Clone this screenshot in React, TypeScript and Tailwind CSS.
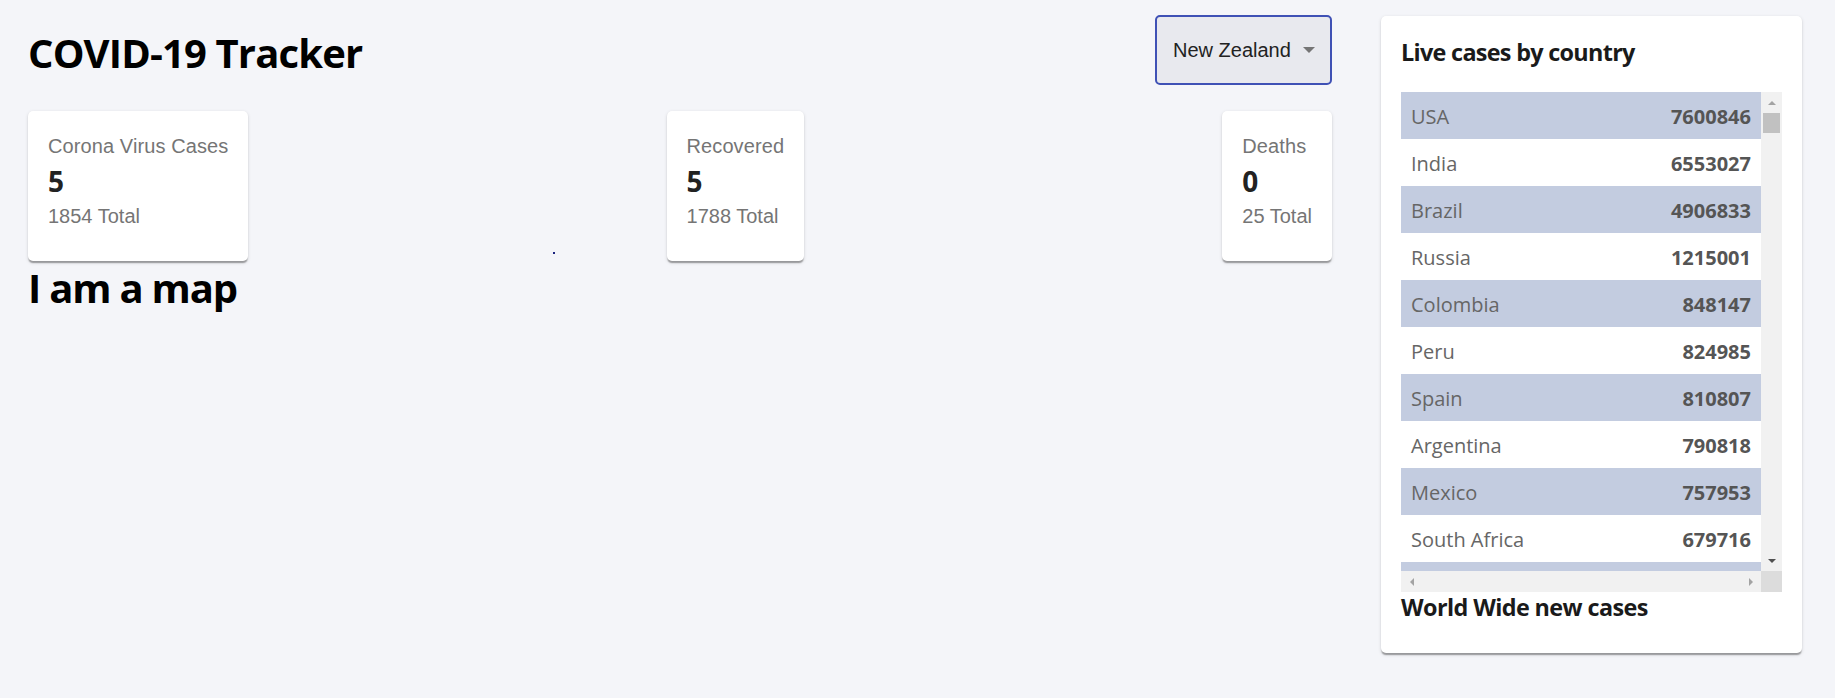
import React from 'react';

type Stat = { title: string; cases: number; total: number };

const stats: Stat[] = [
  { title: 'Corona Virus Cases', cases: 5, total: 1854 },
  { title: 'Recovered', cases: 5, total: 1788 },
  { title: 'Deaths', cases: 0, total: 25 },
];

const countries: [string, number][] = [
  ['USA', 7600846],
  ['India', 6553027],
  ['Brazil', 4906833],
  ['Russia', 1215001],
  ['Colombia', 848147],
  ['Peru', 824985],
  ['Spain', 810807],
  ['Argentina', 790818],
  ['Mexico', 757953],
  ['South Africa', 679716],
];

function InfoBox({ title, cases, total }: Stat) {
  return (
    <div className="bg-white rounded-[5px] pt-[20px] px-[20px] pb-[30px] shadow-[0_2.5px_1.25px_-1.25px_rgba(0,0,0,0.2),0_1.25px_1.25px_0_rgba(0,0,0,0.14),0_1.25px_3.75px_0_rgba(0,0,0,0.12)]">
      <p className="font-['Liberation_Sans',Arial,sans-serif] text-[20px] leading-[30px] text-[#757575] whitespace-nowrap tracking-[0.1px]">
        {title}
      </p>
      <h2 className="font-['Open_Sans',sans-serif] text-[28px] leading-[40px] font-bold text-[#222]">{cases}</h2>
      <p className="font-['Liberation_Sans',Arial,sans-serif] text-[20px] leading-[30px] text-[#757575] whitespace-nowrap">
        {total} Total
      </p>
    </div>
  );
}

function CountryTable() {
  return (
    <div className="w-[381px] h-[500px] flex flex-col">
      <div className="flex h-[479px]">
        <div className="w-[360px] overflow-hidden">
          {countries.map(([name, cases], i) => (
            <div
              key={name}
              className={`flex justify-between items-center h-[47px] px-[10px] pt-[1px] text-[20px] leading-[27px] font-['Open_Sans',sans-serif] ${
                i % 2 === 0 ? 'bg-[#c3cce0]' : 'bg-white'
              }`}
            >
              <span className="text-[#666]">{name}</span>
              <span className="font-bold text-[#555]">{cases}</span>
            </div>
          ))}
          {/* next row, scrolled out of view */}
          <div className="h-[47px] bg-[#c3cce0]" />
        </div>
        {/* vertical scrollbar */}
        <div className="w-[21px] bg-[#f1f1f1] flex flex-col items-center">
          <div className="h-[21px] w-full flex items-center justify-center">
            <div className="w-0 h-0 border-x-[4px] border-x-transparent border-b-[4px] border-b-[#a3a3a3]" />
          </div>
          <div className="w-[17px] h-[20px] bg-[#c1c1c1]" />
          <div className="flex-1" />
          <div className="h-[21px] w-full flex items-center justify-center">
            <div className="w-0 h-0 border-x-[4px] border-x-transparent border-t-[4px] border-t-[#505050]" />
          </div>
        </div>
      </div>
      {/* horizontal scrollbar */}
      <div className="flex h-[21px]">
        <div className="w-[360px] bg-[#f1f1f1] flex items-center justify-between">
          <div className="w-[21px] h-full flex items-center justify-center">
            <div className="w-0 h-0 border-y-[4px] border-y-transparent border-r-[4px] border-r-[#a3a3a3]" />
          </div>
          <div className="w-[21px] h-full flex items-center justify-center">
            <div className="w-0 h-0 border-y-[4px] border-y-transparent border-l-[4px] border-l-[#a3a3a3]" />
          </div>
        </div>
        <div className="w-[21px] bg-[#dcdcdc]" />
      </div>
    </div>
  );
}

export default function App() {
  return (
    <div className="min-h-screen bg-[#f4f5f9] flex gap-[49px] pl-[28px] pr-[33px] pt-[15px]">
      <div className="flex-1 min-w-0">
        <div className="flex justify-between items-start">
          <h1 className="mt-[11px] font-['Open_Sans',sans-serif] text-[40px] leading-[54px] font-bold tracking-[-0.85px] text-black">
            COVID-19 Tracker
          </h1>
          <div className="w-[177px] h-[70px] border-2 border-[#3f51b5] rounded-[5px] bg-[#e8e9ee] flex items-center justify-between pl-[16px] pr-[15px]">
            <span className="font-['Liberation_Sans',Arial,sans-serif] text-[20px] text-[#222]">New Zealand</span>
            <div className="w-0 h-0 border-x-[6px] border-x-transparent border-t-[6px] border-t-[#757575]" />
          </div>
        </div>

        <div className="relative flex justify-between mt-[26px]">
          {stats.map((s) => (
            <InfoBox key={s.title} {...s} />
          ))}
          <span className="absolute left-[525px] top-[141px] w-[2px] h-[2px] bg-[#1a237e]" />
        </div>

        <h1 className="font-['Open_Sans',sans-serif] text-[40px] leading-[54px] font-bold tracking-[-1.2px] text-black">
          I am a map
        </h1>
      </div>

      <aside className="w-[421px] mt-[1px] self-start bg-white rounded-[5px] px-[20px] pt-[20px] pb-[31px] shadow-[0_2.5px_1.25px_-1.25px_rgba(0,0,0,0.2),0_1.25px_1.25px_0_rgba(0,0,0,0.14),0_1.25px_3.75px_0_rgba(0,0,0,0.12)]">
        <h3 className="font-['Open_Sans',sans-serif] text-[23.4px] leading-[32px] font-bold tracking-[-0.7px] text-[#1a1a1a] mb-[24px]">
          Live cases by country
        </h3>
        <CountryTable />
        <h3 className="font-['Open_Sans',sans-serif] text-[23.4px] leading-[30px] font-bold tracking-[-0.6px] text-[#1a1a1a]">
          World Wide new cases
        </h3>
      </aside>
    </div>
  );
}
